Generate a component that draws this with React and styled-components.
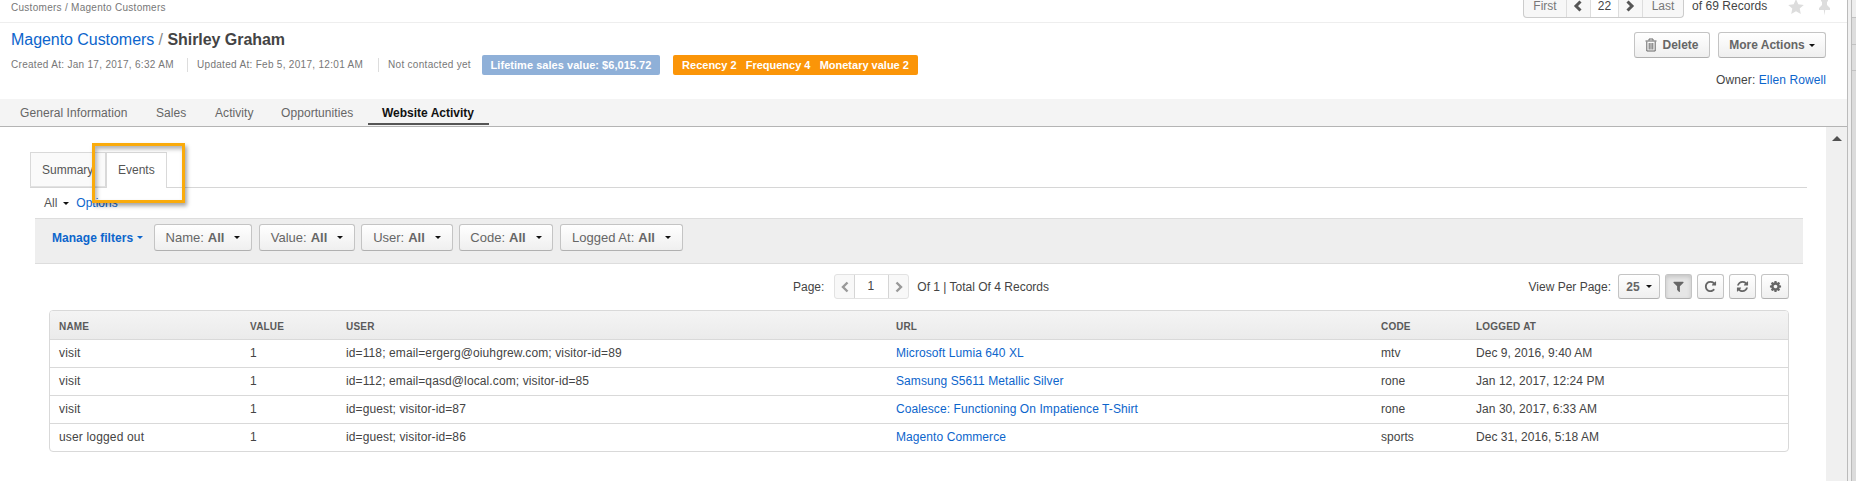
import React from 'react';
import styled, { createGlobalStyle, css } from 'styled-components';

const Global = createGlobalStyle`
  * { box-sizing: border-box; }
  body { margin: 0; background: #fff; overflow: hidden; }
  body, button { font-family: "Liberation Sans", Arial, sans-serif; font-size: 12px; color: #444; }
  button { cursor: pointer; margin: 0; }
  a { color: #0c65cc; text-decoration: none; }
`;

const Shell = styled.div`
  display: flex;
  width: 1856px;
  height: 481px;
  overflow: hidden;
`;
const Page = styled.main`
  width: 1847px;
  display: flex;
  flex-direction: column;
`;
const Gutter = styled.div`
  width: 5px;
  background: #f0f0f0;
  border-left: 1px solid #bbb;
  border-right: 1px solid #bbb;
`;
const SidePanel = styled.aside`
  flex: 1;
  background: #dcdcdc;
`;
const SideSlot = styled.div`
  height: ${(p) => p.$h}px;
  background: ${(p) => p.$bg || '#dedede'};
  border-bottom: 1px solid #c2c2c2;
`;

const TopBar = styled.div`
  height: 23px;
  border-bottom: 1px solid #eee;
  display: flex;
  justify-content: space-between;
  padding: 0 16px 0 11px;
`;
const Crumbs = styled.div`
  font-size: 10px;
  line-height: 15px;
  letter-spacing: 0.28px;
  color: #777;
  white-space: pre;
`;
const Records = styled.div`
  display: flex;
  align-items: flex-start;
  color: #444;
`;
const PagerGroup = styled.div`
  display: flex;
  height: 18px;
  border: 1px solid #ccc;
  border-top: 0;
  border-radius: 0 0 4px 4px;
  background: #f7f7f7;
  font-size: 12px;
  line-height: 13px;
`;
const PagerCell = styled.div`
  width: ${(p) => p.$w}px;
  height: 17px;
  display: flex;
  justify-content: center;
  color: ${(p) => (p.$strong ? '#444' : '#777')};
  background: ${(p) => (p.$strong ? '#fff' : 'transparent')};
  & + & { border-left: 1px solid #ddd; }
  svg { margin-right: 2px; }
`;
const RecordCount = styled.span`
  margin-left: 8px;
  line-height: 13px;
  width: 96px;
  letter-spacing: 0.05px;
  white-space: nowrap;
`;
const Marks = styled.div`
  display: flex;
  gap: 14px;
`;

const Header = styled.header`
  height: 76px;
  display: flex;
  justify-content: space-between;
  padding: 0 21px 0 11px;
`;
const Title = styled.h1`
  margin: 7px 0 0;
  font-size: 16px;
  font-weight: 400;
  line-height: 20px;
  letter-spacing: -0.05px;
  color: #888;
  white-space: pre;
  strong { color: #444; }
`;
const Meta = styled.div`
  display: flex;
  align-items: center;
  height: 20px;
  margin-top: 5px;
  font-size: 10px;
  letter-spacing: 0.3px;
  color: #777;
  white-space: nowrap;
`;
const MetaItem = styled.span`
  width: ${(p) => p.$w}px;
  line-height: 14px;
  & + & { border-left: 1px solid #ddd; padding-left: 9px; }
`;
const Badge = styled.span`
  width: ${(p) => p.$w}px;
  height: 20px;
  border-radius: 2px;
  background: ${(p) => p.$bg};
  color: #fff;
  font-size: 11px;
  font-weight: 700;
  line-height: 20px;
  letter-spacing: 0.04px;
  text-align: center;
  white-space: pre;
  & + & { margin-left: 13px; letter-spacing: 0; }
`;
const HeaderSide = styled.div`
  display: flex;
  flex-direction: column;
  align-items: flex-end;
  padding-top: 9px;
`;
const Actions = styled.div`
  display: flex;
  gap: 8px;
`;
const buttonFace = css`
  border: 1px solid #c4c4c4;
  border-bottom-color: #b0b0b0;
  border-radius: 3px;
  background: linear-gradient(#fff, #efefef);
  color: #666;
  padding: 0;
  display: flex;
  align-items: center;
  justify-content: center;
  white-space: nowrap;
`;
const ActionButton = styled.button`
  ${buttonFace}
  width: ${(p) => p.$w}px;
  height: 26px;
  font-size: 12px;
  font-weight: 700;
`;
const ButtonLabel = styled.span`
  margin-left: 5px;
`;
const Owner = styled.div`
  margin-top: 14px;
  line-height: 16px;
  letter-spacing: 0.1px;
`;
const Caret = styled.span`
  border: solid transparent;
  border-width: 3px 3px 0;
  border-top-color: ${(p) => p.$color || '#111'};
  margin-left: ${(p) => p.$gap || 4}px;
`;

const TabBar = styled.nav`
  height: 28px;
  background: #f4f4f4;
  border-bottom: 1px solid #b4b4b4;
  display: flex;
`;
const Tab = styled.a`
  height: 26px;
  width: ${(p) => p.$w}px;
  padding-left: ${(p) => p.$pad}px;
  line-height: 29px;
  letter-spacing: 0.07px;
  color: #666;
  white-space: nowrap;
  ${(p) => p.$active && css`
    color: #111;
    font-weight: 700;
    letter-spacing: 0;
    border-bottom: 2px solid #555;
  `}
`;

const Body = styled.div`
  flex: 1;
  display: flex;
  min-height: 0;
`;
const Content = styled.section`
  width: 1826px;
  padding: 25px 0 0 30px;
`;
const Scrollbar = styled.div`
  flex: 1;
  background: #f0f0f0;
  display: flex;
  justify-content: center;
  padding-top: 9px;
`;
const ScrollArrow = styled.span`
  height: 5px;
  border: solid transparent;
  border-width: 0 5px 5px;
  border-bottom-color: #505050;
`;

const SubTabs = styled.div`
  position: relative;
  width: 1777px;
  height: 36px;
  border-bottom: 1px solid #d6d6d6;
  display: flex;
`;
const SubTab = styled.a`
  width: ${(p) => p.$w}px;
  height: ${(p) => (p.$active ? 36 : 35)}px;
  padding-left: 11px;
  line-height: 34px;
  color: #555;
  border: 1px solid #d9d9d9;
  border-bottom: ${(p) => (p.$active ? '0' : '1px solid #e2e2e2')};
  background: ${(p) => (p.$active ? '#fff' : '#fafafa')};
`;
const Highlight = styled.div`
  position: absolute;
  left: 62px;
  top: -9px;
  width: 93px;
  height: 60px;
  border: 3px solid #faab0c;
  box-shadow: 2px 3px 4px rgba(0, 0, 0, 0.35), inset 2px 3px 4px rgba(0, 0, 0, 0.3);
`;
const ViewRow = styled.div`
  display: flex;
  align-items: center;
  height: 30px;
  padding-left: 14px;
  color: #555;
  a { margin-left: 7px; }
`;
const FilterBar = styled.div`
  margin-left: 5px;
  width: 1768px;
  height: 46px;
  background: #eee;
  border: solid #ddd;
  border-width: 1px 0;
  display: flex;
  align-items: flex-start;
  padding: 5px 0 0 17px;
`;
const ManageFilters = styled.a`
  display: flex;
  align-items: center;
  height: 27px;
  width: 102px;
  font-weight: 700;
  letter-spacing: 0.03px;
`;
const Filter = styled.button`
  ${buttonFace}
  width: ${(p) => p.$w}px;
  height: 27px;
  margin-right: ${(p) => p.$mr || 0}px;
  font-size: 13px;
  b { margin-left: 4px; }
`;
const GridBar = styled.div`
  height: 46px;
  display: flex;
  align-items: center;
  padding: 0 0 1px 763px;
`;
const PageSwitch = styled.div`
  display: flex;
  width: 75px;
  height: 25px;
  margin: 0 8px 0 10px;
  border: 1px solid #e2e2e2;
  border-radius: 3px;
  background: #f8f8f8;
`;
const PageArrow = styled.span`
  width: 19px;
  display: flex;
  align-items: center;
  justify-content: center;
`;
const PageNumber = styled.span`
  width: 35px;
  padding-right: 2px;
  border: solid #d5d5d5;
  border-width: 0 1px;
  background: #fff;
  text-align: center;
  line-height: 23px;
`;
const GridTools = styled.div`
  margin-left: auto;
  margin-right: 37px;
  display: flex;
  align-items: center;
  gap: 5px;
`;
const ToolsLabel = styled.span`
  margin-right: 2px;
`;
const ToolButton = styled.button`
  ${buttonFace}
  width: ${(p) => p.$w || 27}px;
  height: 25px;
  font-weight: 700;
  ${(p) => p.$pressed && css`
    background: #e6e6e6;
    box-shadow: inset 0 2px 4px rgba(0, 0, 0, 0.15);
  `}
`;

const Table = styled.div`
  margin-left: 19px;
  width: 1740px;
  border: 1px solid #d9d9d9;
  border-radius: 4px;
  overflow: hidden;
`;
const Row = styled.div`
  display: grid;
  grid-template-columns: 191px 96px 550px 485px 95px 1fr;
  padding-left: 9px;
  height: 28px;
  line-height: 26px;
  white-space: nowrap;
  & + & { border-top: 1px solid #d9d9d9; }
`;
const HeadRow = styled(Row)`
  line-height: 31px;
  font-size: 10px;
  font-weight: 700;
  letter-spacing: 0.2px;
  color: #5a5a5a;
  background: linear-gradient(#f4f4f4, #ebebeb);
`;
const Cell = styled.span`
  letter-spacing: ${(p) => p.$track}px;
`;

const glyphs = {
  filter: 'M1595 295q17 41-14 70l-493 493v742q0 42-39 59-13 5-25 5-27 0-45-19l-256-256q-19-19-19-45v-486l-493-493q-31-29-14-70 17-39 59-39h1280q42 0 59 39z',
  repeat: 'M1664 256v448q0 26-19 45t-45 19h-448q-42 0-59-40-17-39 14-69l138-138q-148-137-349-137-104 0-198.500 40.500t-163.500 109.500-109.500 163.500-40.500 198.500 40.500 198.500 109.500 163.500 163.500 109.500 198.500 40.500q119 0 225-52t179-147q7-10 23-12 15 0 25 9l137 138q9 8 9.500 20.500t-7.500 22.500q-109 132-264 204.500t-327 72.500q-156 0-298-61t-245-164-164-245-61-298 61-298 164-245 245-164 298-61q147 0 284.500 55.500t244.500 156.500l130-129q29-31 70-14 39 17 39 59z',
  refresh: 'M1639 1056q0 5-1 7-64 268-268 434.500t-478 166.500q-146 0-282.500-55t-243.500-157l-129 129q-19 19-45 19t-45-19-19-45v-448q0-26 19-45t45-19h448q26 0 45 19t19 45-19 45l-137 137q71 66 161 102t187 36q134 0 250-65t186-179q11-17 53-117 8-23 30-23h192q13 0 22.500 9.500t9.500 22.500zm25-800v448q0 26-19 45t-45 19h-448q-26 0-45-19t-19-45 19-45l138-138q-148-137-349-137-134 0-250 65t-186 179q-11 17-53 117-8 23-30 23h-199q-13 0-22.500-9.500t-9.500-22.500v-7q65-268 270-434.500t480-166.500q146 0 284 55.500t245 156.500l130-129q19-19 45-19t45 19 19 45z',
  cog: 'M1152 896q0-106-75-181t-181-75-181 75-75 181 75 181 181 75 181-75 75-181zm512-109v222q0 12-8 23t-20 13l-185 28q-19 54-39 91 35 50 107 138 10 12 10 25t-9 23q-27 37-99 108t-94 71q-12 0-26-9l-138-108q-44 23-91 38-16 136-29 186-7 28-36 28h-222q-14 0-24.500-8.500t-11.500-21.500l-28-184q-49-16-90-37l-141 107q-10 9-25 9-14 0-25-11-126-114-165-168-7-10-7-23 0-12 8-23 15-21 51-66.500t54-70.500q-27-50-41-99l-183-27q-13-2-21-12.500t-8-23.500v-222q0-12 8-23t19-13l186-28q14-46 39-92-40-57-107-138-10-12-10-24 0-10 9-23 26-36 98.500-107.500t94.500-71.500q13 0 26 10l138 107q44-23 91-38 16-136 29-186 7-28 36-28h222q14 0 24.500 8.500t11.500 21.500l28 184q49 16 90 37l142-107q9-9 24-9 13 0 25 10 129 119 165 170 7 8 7 22 0 12-8 23-15 21-51 66.500t-54 70.500q26 50 41 98l183 28q13 2 21 12.500t8 23.500z',
};

const Glyph = ({ name }) => (
  <svg width="13" height="13" viewBox="0 0 1792 1792" fill="#666"><path d={glyphs[name]} /></svg>
);
const Chevron = ({ right, color = '#555', w = 3 }) => (
  <svg width="12" height="12" viewBox="0 0 12 12" fill="none" stroke={color} strokeWidth={w}>
    <path d={right ? 'M3.500 1.500L8 6l-4.500 4.500' : 'M8.500 1.500L4 6l4.500 4.500'} />
  </svg>
);
const Trash = () => (
  <svg width="12" height="14" viewBox="0 0 12 14" fill="none" stroke="#666">
    <path d="M0.500 3h11M4 2.500V1h4v1.500M1.800 3.500v9.500h8.400V3.500M4.200 5v6.500M6 5v6.500M7.800 5v6.500" />
  </svg>
);
const Star = () => (
  <svg width="16" height="16" viewBox="0 0 16 16" fill="#ddd">
    <path d="M8-1l2.300 5.300 5.500.6-4.100 3.700 1.100 5.400L8 11.200 3.200 14l1.100-5.400L.2 4.900l5.500-.6z" />
  </svg>
);
const Pin = () => (
  <svg width="13" height="17" viewBox="0 0 13 17" fill="#ddd">
    <path d="M3 0h7v1l-1 1v3l3 3v2H7.200L6.500 15.500 5.800 10H1V8l3-3V2L3 1z" />
  </svg>
);

const tabs = [
  ['General Information', 136, 20],
  ['Sales', 59, 20],
  ['Activity', 66, 20],
  ['Opportunities', 107, 20],
  ['Website Activity', 121, 14],
];
const filters = [['Name', 98, 7], ['Value', 96, 6], ['User', 92, 6], ['Code', 94, 7], ['Logged At', 123]];
const columns = ['NAME', 'VALUE', 'USER', 'URL', 'CODE', 'LOGGED AT'];
const tracking = [0.16, 0, 0.11, 0.08, 0.03, 0.05];
const rows = [
  ['visit', '1', 'id=118; email=ergerg@oiuhgrew.com; visitor-id=89', 'Microsoft Lumia 640 XL', 'mtv', 'Dec 9, 2016, 9:40 AM'],
  ['visit', '1', 'id=112; email=qasd@local.com; visitor-id=85', 'Samsung S5611 Metallic Silver', 'rone', 'Jan 12, 2017, 12:24 PM'],
  ['visit', '1', 'id=guest; visitor-id=87', 'Coalesce: Functioning On Impatience T-Shirt', 'rone', 'Jan 30, 2017, 6:33 AM'],
  ['user logged out', '1', 'id=guest; visitor-id=86', 'Magento Commerce', 'sports', 'Dec 31, 2016, 5:18 AM'],
];

export default function App() {
  return (
    <Shell>
      <Global />
      <Page>
        <TopBar>
          <Crumbs>Customers / Magento Customers</Crumbs>
          <Records>
            <PagerGroup>
              <PagerCell $w={42}>First</PagerCell>
              <PagerCell $w={24}><Chevron /></PagerCell>
              <PagerCell $w={28} $strong>22</PagerCell>
              <PagerCell $w={24}><Chevron right /></PagerCell>
              <PagerCell $w={41}>Last</PagerCell>
            </PagerGroup>
            <RecordCount>of 69 Records</RecordCount>
            <Marks><Star /><Pin /></Marks>
          </Records>
        </TopBar>
        <Header>
          <div>
            <Title><a href="#customers">Magento Customers</a> / <strong>Shirley Graham</strong></Title>
            <Meta>
              <MetaItem $w={176}>Created At: Jan 17, 2017, 6:32 AM</MetaItem>
              <MetaItem $w={191}>Updated At: Feb 5, 2017, 12:01 AM</MetaItem>
              <MetaItem $w={104}>Not contacted yet</MetaItem>
              <Badge $w={178} $bg="#8fb0d8">Lifetime sales value: $6,015.72</Badge>
              <Badge $w={245} $bg="#fb9508">Recency 2   Frequency 4   Monetary value 2</Badge>
            </Meta>
          </div>
          <HeaderSide>
            <Actions>
              <ActionButton $w={76}><Trash /><ButtonLabel>Delete</ButtonLabel></ActionButton>
              <ActionButton $w={108}>More Actions<Caret /></ActionButton>
            </Actions>
            <Owner>Owner: <a href="#owner">Ellen Rowell</a></Owner>
          </HeaderSide>
        </Header>
        <TabBar>
          {tabs.map(([label, w, pad], i) => (
            <Tab key={label} $w={w} $pad={pad} $active={i === 4}>{label}</Tab>
          ))}
        </TabBar>
        <Body>
          <Content>
            <SubTabs>
              <SubTab $w={76}>Summary</SubTab>
              <SubTab $w={61} $active>Events</SubTab>
              <Highlight />
            </SubTabs>
            <ViewRow>All<Caret $gap={6} /><a href="#options">Options</a></ViewRow>
            <FilterBar>
              <ManageFilters>Manage filters<Caret $color="#0c65cc" /></ManageFilters>
              {filters.map(([label, w, mr]) => (
                <Filter key={label} $w={w} $mr={mr}>{label}: <b>All</b><Caret $gap={10} /></Filter>
              ))}
            </FilterBar>
            <GridBar>
              Page:
              <PageSwitch>
                <PageArrow><Chevron color="#999" w={2.4} /></PageArrow>
                <PageNumber>1</PageNumber>
                <PageArrow><Chevron right color="#999" w={2.4} /></PageArrow>
              </PageSwitch>
              Of 1 | Total Of 4 Records
              <GridTools>
                <ToolsLabel>View Per Page:</ToolsLabel>
                <ToolButton $w={42}>25<Caret $gap={6} /></ToolButton>
                <ToolButton $pressed><Glyph name="filter" /></ToolButton>
                <ToolButton><Glyph name="repeat" /></ToolButton>
                <ToolButton><Glyph name="refresh" /></ToolButton>
                <ToolButton $w={28}><Glyph name="cog" /></ToolButton>
              </GridTools>
            </GridBar>
            <Table>
              <HeadRow>
                {columns.map((name) => <span key={name}>{name}</span>)}
              </HeadRow>
              {rows.map((row) => (
                <Row key={row[2]}>
                  {row.map((cell, i) => (
                    <Cell key={columns[i]} $track={tracking[i]}>
                      {i === 3 ? <a href="#url">{cell}</a> : cell}
                    </Cell>
                  ))}
                </Row>
              ))}
            </Table>
          </Content>
          <Scrollbar><ScrollArrow /></Scrollbar>
        </Body>
      </Page>
      <Gutter />
      <SidePanel>
        <SideSlot $h={18} $bg="#eee" />
        <SideSlot $h={27} />
        <SideSlot $h={26} />
      </SidePanel>
    </Shell>
  );
}
